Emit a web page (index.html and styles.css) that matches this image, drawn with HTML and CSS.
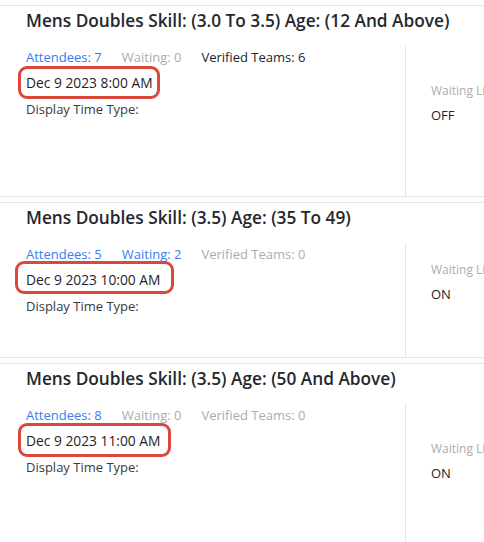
FILE: index.html
```html
<!DOCTYPE html>
<html lang="en">
<head>
<meta charset="utf-8">
<title>Events</title>
<link rel="stylesheet" href="styles.css">
</head>
<body>
<div class="event-list">
  <section class="event event--tall">
    <h2 class="event-title">Mens Doubles Skill: (3.0 To 3.5) Age: (12 And Above)</h2>
    <div class="event-body">
      <div class="event-main">
        <div class="stats">
          <span class="stat stat--link">Attendees: 7</span>
          <span class="stat stat--muted">Waiting: 0</span>
          <span class="stat">Verified Teams: 6</span>
        </div>
        <div class="date-row"><span class="date date--a">Dec 9 2023 8:00 AM</span></div>
        <div class="display-type">Display Time Type:</div>
      </div>
      <div class="event-side">
        <div class="side-label">Waiting List</div>
        <div class="side-value">OFF</div>
      </div>
    </div>
  </section>

  <section class="event">
    <h2 class="event-title">Mens Doubles Skill: (3.5) Age: (35 To 49)</h2>
    <div class="event-body">
      <div class="event-main">
        <div class="stats">
          <span class="stat stat--link">Attendees: 5</span>
          <span class="stat stat--link">Waiting: 2</span>
          <span class="stat stat--muted">Verified Teams: 0</span>
        </div>
        <div class="date-row"><span class="date date--b">Dec 9 2023 10:00 AM</span></div>
        <div class="display-type">Display Time Type:</div>
      </div>
      <div class="event-side">
        <div class="side-label">Waiting List</div>
        <div class="side-value">ON</div>
      </div>
    </div>
  </section>

  <section class="event event--tall">
    <h2 class="event-title">Mens Doubles Skill: (3.5) Age: (50 And Above)</h2>
    <div class="event-body">
      <div class="event-main">
        <div class="stats">
          <span class="stat stat--link">Attendees: 8</span>
          <span class="stat stat--muted">Waiting: 0</span>
          <span class="stat stat--muted">Verified Teams: 0</span>
        </div>
        <div class="date-row"><span class="date date--c">Dec 9 2023 11:00 AM</span></div>
        <div class="display-type">Display Time Type:</div>
      </div>
      <div class="event-side">
        <div class="side-label">Waiting List</div>
        <div class="side-value">ON</div>
      </div>
    </div>
  </section>
</div>
</body>
</html>
```

FILE: styles.css
```css
html, body {
  margin: 0;
  padding: 0;
  background: #ffffff;
  overflow: hidden;
}

body {
  font-family: "Open Sans", "Noto Sans", sans-serif;
  color: #212529;
}

.event-list {
  width: 560px;
  padding-top: 5px;
  display: flex;
  flex-direction: column;
  gap: 5px;
}

.event {
  border-top: 1px solid #e4e4e4;
  border-bottom: 1px solid #e4e4e4;
}

.event-title {
  margin: 0;
  padding: 3px 0 13px 26px;
  font-size: 17.25px;
  line-height: 24px;
  font-weight: 600;
  color: #24282d;
  white-space: nowrap;
}

.event-body {
  display: flex;
  height: 114px;
}

.event--tall .event-body {
  height: 150px;
}

.event-main {
  width: 405px;
  box-sizing: border-box;
  padding: 1px 0 0 26px;
  display: flex;
  flex-direction: column;
  gap: 6px;
}

.stats {
  display: flex;
  gap: 20px;
  font-size: 13px;
  line-height: 20px;
  white-space: nowrap;
}

.stat {
  color: #212529;
}

.stat--link {
  color: #3a7bf2;
}

.stat--muted {
  color: #acacac;
}

.date-row {
  font-size: 13.8px;
  line-height: 20px;
}

.date {
  position: relative;
  color: #1f2328;
}

.date::after {
  content: "";
  position: absolute;
  border: 3px solid #d9483a;
  border-radius: 9px;
  top: -7px;
  bottom: -7px;
  left: -8px;
  right: -7px;
}

.date--b::after {
  left: -11px;
  right: -14px;
  top: -9px;
  bottom: -5px;
}

.date--c::after {
  left: -8px;
  right: -11px;
  top: -8px;
  bottom: -7px;
}

.display-type {
  font-size: 13px;
  line-height: 20px;
  color: #3a3a3a;
}

.event-side {
  flex: 1;
  border-left: 1px solid #e4e4e4;
  padding: 0 0 36px 25px;
  display: flex;
  flex-direction: column;
  justify-content: center;
  gap: 4px;
}

.side-label {
  font-size: 12px;
  line-height: 20px;
  color: #acacac;
  white-space: nowrap;
}

.side-value {
  font-size: 13px;
  line-height: 20px;
  color: #212529;
}
```
